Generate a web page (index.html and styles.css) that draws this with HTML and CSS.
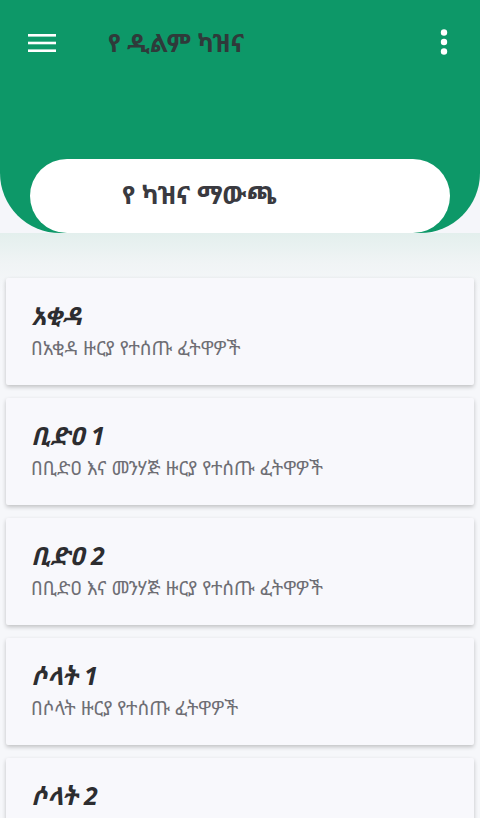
FILE: index.html
```html
<!DOCTYPE html>
<html lang="am">
<head>
<meta charset="utf-8">
<link rel="stylesheet" href="styles.css">
</head>
<body>
<div class="screen">
  <header class="hero">
    <div class="toolbar">
      <svg class="icon" width="28" height="20" viewBox="0 0 28 20"><rect x="0" y="2" width="28" height="2.6" fill="#fff"/><rect x="0" y="9.7" width="28" height="2.6" fill="#fff"/><rect x="0" y="17.4" width="28" height="2.6" fill="#fff"/></svg>
      <h1 class="app-title">የ ዲልም ካዝና</h1>
      <svg class="icon more" width="8" height="26" viewBox="0 0 8 26"><circle cx="4" cy="3.5" r="3.2" fill="#fff"/><circle cx="4" cy="13" r="3.2" fill="#fff"/><circle cx="4" cy="22.5" r="3.2" fill="#fff"/></svg>
    </div>
    <div class="pill">የ ካዝና ማውጫ</div>
  </header>
  <main class="list">
    <div class="card"><div class="card-title">አቂዳ</div><div class="card-sub">በአቂዳ ዙርያ የተሰጡ ፈትዋዎች</div></div>
    <div class="card"><div class="card-title">ቢድዐ 1</div><div class="card-sub">በቢድዐ እና መንሃጅ ዙርያ የተሰጡ ፈትዋዎች</div></div>
    <div class="card"><div class="card-title">ቢድዐ 2</div><div class="card-sub">በቢድዐ እና መንሃጅ ዙርያ የተሰጡ ፈትዋዎች</div></div>
    <div class="card"><div class="card-title">ሶላት 1</div><div class="card-sub">በሶላት ዙርያ የተሰጡ ፈትዋዎች</div></div>
    <div class="card"><div class="card-title">ሶላት 2</div><div class="card-sub">በሶላት ዙርያ የተሰጡ ፈትዋዎች</div></div>
  </main>
</div>
</body>
</html>
```
FILE: styles.css
```css
* { box-sizing: border-box; }
html, body { margin: 0; padding: 0; }
body {
  width: 480px;
  height: 818px;
  overflow: hidden;
  background: #f5f6fa;
  font-family: "Noto Sans", "Noto Sans Ethiopic", "DejaVu Sans", sans-serif;
}
.screen {
  background: linear-gradient(180deg, #e3efed 0px, #f0f4f5 30px, #f6f7fa 60px);
  background-position: 0 233px;
  background-repeat: no-repeat;
  height: 818px;
  overflow: hidden;
}
.hero {
  background: #0d9868;
  height: 233px;
  border-radius: 0 0 60px 60px;
  display: flex;
  flex-direction: column;
  justify-content: space-between;
  align-items: center;
}
.toolbar {
  width: 100%;
  height: 84px;
  display: flex;
  align-items: center;
  padding: 0 32px 0 28px;
}
.icon { display: block; }
.app-title {
  margin: 0 0 0 52px;
  flex: 1;
  font-size: 24.5px;
  font-weight: 700;
  color: #2f3a3a;
}
.pill {
  width: 420px;
  height: 74px;
  background: #fff;
  border-radius: 37px;
  display: flex;
  align-items: center;
  padding-left: 92px;
  padding-bottom: 4px;
  font-size: 25.5px;
  font-weight: 700;
  color: #3a3a40;
}
.list {
  display: flex;
  flex-direction: column;
  gap: 13px;
  padding: 45px 6px 0;
}
.card {
  flex: 0 0 107px;
  height: 107px;
  background: #f8f8fc;
  box-shadow: 0 2px 4px rgba(0,0,0,0.22);
  border-radius: 2px;
  padding: 20px 25px 0;
}
.card-title {
  font-size: 25px;
  font-weight: 700;
  font-style: italic;
  color: #2d2d30;
  line-height: 34px;
}
.card-sub {
  margin-top: 3px;
  font-size: 19px;
  color: #6e6e74;
  line-height: 26px;
}
```
